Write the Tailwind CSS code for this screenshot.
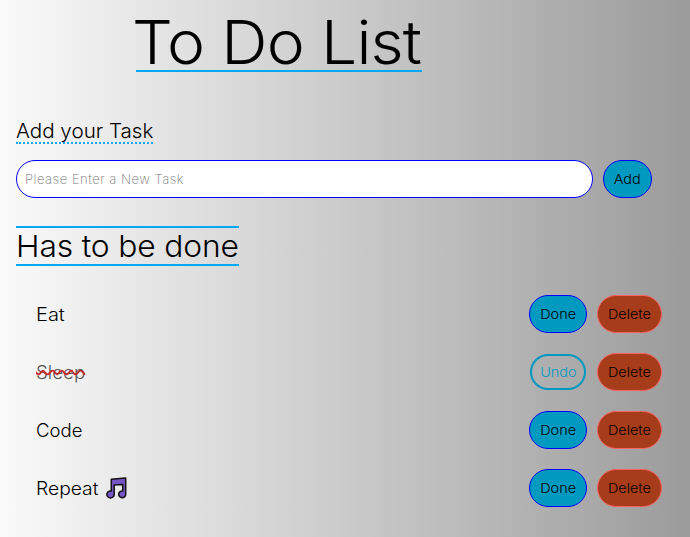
<!DOCTYPE html>
<html lang="en">
<head>
<meta charset="utf-8">
<title>To Do List</title>
<script src="https://cdn.jsdelivr.net/npm/@tailwindcss/browser@4"></script>
</head>
<body class="h-[537px] w-[690px] overflow-hidden bg-linear-to-r/srgb from-[#fafafa] to-[#9b9b9b] pl-4 font-['Inter','Liberation_Sans',sans-serif] font-light text-black">
<h1 class="ml-[120px] h-[72px] w-[286px] border-b-2 border-[#03a9f4] pt-[6px] text-[60px] leading-[73px] font-light whitespace-nowrap"><span class="-ml-[4px] inline-block origin-left scale-x-[1.07] tracking-[-0.8px]">To Do List</span></h1>
<main>
  <form class="pt-[48px]">
    <label class="block h-6 w-[137px] border-b-2 border-dotted border-[#03a9f4] text-[20px] leading-[22px] whitespace-nowrap"><span class="inline-block origin-left scale-x-[1.03]">Add your Task</span></label>
    <div class="mt-4 flex gap-[10px]">
      <input class="h-[38px] w-[577px] rounded-[20px] border border-[#0000ff] bg-white px-2 text-[13px] font-extralight tracking-[0.52px] placeholder:text-[#757575]" placeholder="Please Enter a New Task">
      <button type="button" class="h-[38px] w-[49px] rounded-[20px] border border-[#0000ff] bg-[#0099bf] pt-px text-[13px]"><span class="inline-block scale-x-[1.11]">Add</span></button>
    </div>
  </form>
  <h2 class="mt-7 h-10 w-[223px] border-y-2 border-[#03a9f4] text-[30px] leading-[37px] font-light whitespace-nowrap"><span class="inline-block origin-left scale-x-[1.06] tracking-[-0.15px]">Has to be done</span></h2>
  <ul class="mt-[29px] flex w-[646px] flex-col gap-5 pl-5 text-[18px]">
    <li class="flex h-[38px] items-center gap-[10px]">
      <span class="flex-1"><span class="inline-block origin-left scale-x-[1.11]">Eat</span></span>
      <button class="h-[38px] w-[58px] rounded-[20px] border border-[#0000ff] bg-[#0099bf] pt-px text-[13px]"><span class="inline-block scale-x-[1.11]">Done</span></button>
      <button class="h-[38px] w-[65px] rounded-[20px] border border-[#ff6060] bg-[#a63c1a] pt-px text-[13px]"><span class="inline-block scale-x-[1.1]">Delete</span></button>
    </li>
    <li class="flex h-[38px] items-center gap-[10px]">
      <span class="flex-1"><span class="inline-block origin-left scale-x-[1.04] text-[#555] line-through decoration-[#c62828] decoration-wavy">Sleep</span></span>
      <button class="mx-px h-9 w-14 rounded-[20px] border-2 border-[#0099bf] pt-px text-[13px] text-[#0099bf]"><span class="inline-block scale-x-[1.11]">Undo</span></button>
      <button class="h-[38px] w-[65px] rounded-[20px] border border-[#ff6060] bg-[#a63c1a] pt-px text-[13px]"><span class="inline-block scale-x-[1.1]">Delete</span></button>
    </li>
    <li class="flex h-[38px] items-center gap-[10px]">
      <span class="flex-1"><span class="inline-block origin-left scale-x-[1.03]">Code</span></span>
      <button class="h-[38px] w-[58px] rounded-[20px] border border-[#0000ff] bg-[#0099bf] pt-px text-[13px]"><span class="inline-block scale-x-[1.11]">Done</span></button>
      <button class="h-[38px] w-[65px] rounded-[20px] border border-[#ff6060] bg-[#a63c1a] pt-px text-[13px]"><span class="inline-block scale-x-[1.1]">Delete</span></button>
    </li>
    <li class="flex h-[38px] items-center gap-[10px]">
      <span class="flex flex-1 items-center"><span class="w-[69px]"><span class="inline-block origin-left scale-x-[1.07]">Repeat</span></span>
        <svg class="h-[22px] w-[22px]" viewBox="0 0 22 22" fill="#7855c5" stroke="#111" stroke-width="1.5" stroke-linejoin="round"><path d="M6.3 2.2 20.7 1.1V17.3a3.5 3.4 0 1 1-3-3.3V7.4L9.2 8v9.4a3.7 3.5 0 1 1-2.9-3.4Z"/></svg>
      </span>
      <button class="h-[38px] w-[58px] rounded-[20px] border border-[#0000ff] bg-[#0099bf] pt-px text-[13px]"><span class="inline-block scale-x-[1.11]">Done</span></button>
      <button class="h-[38px] w-[65px] rounded-[20px] border border-[#ff6060] bg-[#a63c1a] pt-px text-[13px]"><span class="inline-block scale-x-[1.1]">Delete</span></button>
    </li>
  </ul>
</main>
</body>
</html>
